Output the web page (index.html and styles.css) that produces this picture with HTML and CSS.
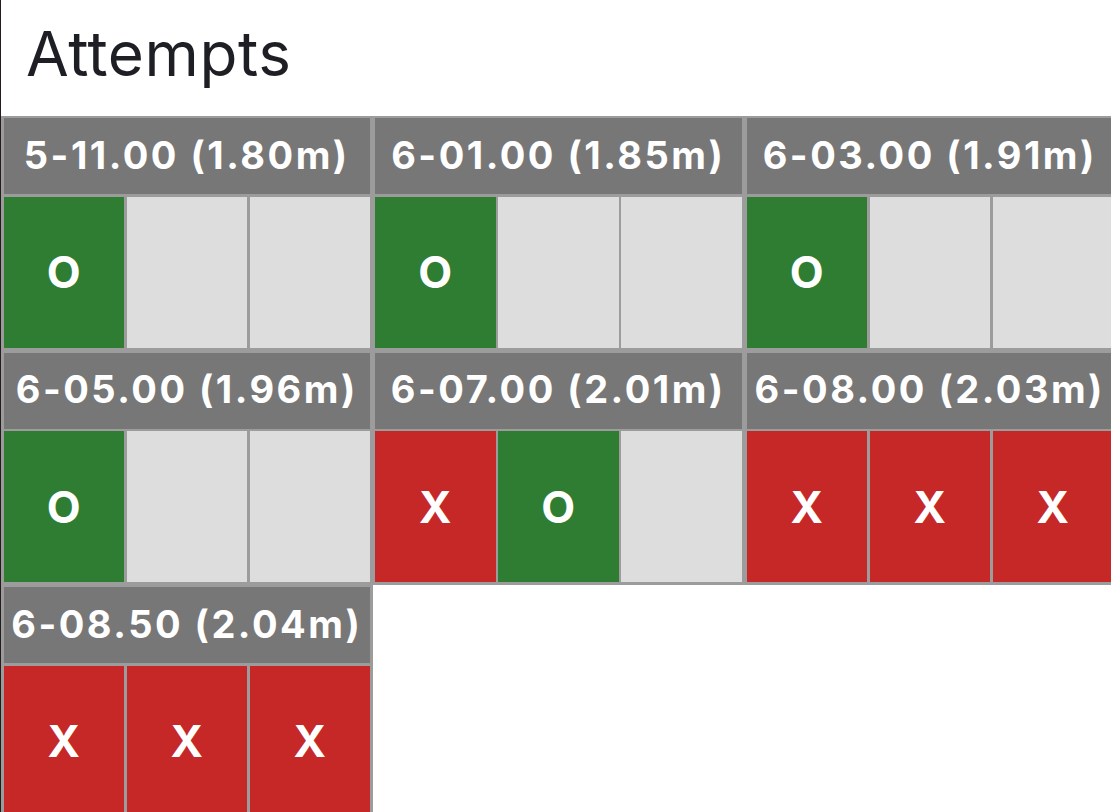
FILE: index.html
```html
<!DOCTYPE html>
<html>
<head>
<meta charset="utf-8">
<link rel="stylesheet" href="styles.css">
</head>
<body>
<div class="page">
  <h1 class="title">Attempts</h1>
  <div class="grid">
    <div class="block">
      <div class="head">5-11.00 (1.80m)</div>
      <div class="cells"><div class="cell ok">O</div><div class="cell"></div><div class="cell"></div></div>
    </div>
    <div class="block">
      <div class="head">6-01.00 (1.85m)</div>
      <div class="cells"><div class="cell ok">O</div><div class="cell"></div><div class="cell"></div></div>
    </div>
    <div class="block">
      <div class="head">6-03.00 (1.91m)</div>
      <div class="cells"><div class="cell ok">O</div><div class="cell"></div><div class="cell"></div></div>
    </div>
    <div class="block">
      <div class="head">6-05.00 (1.96m)</div>
      <div class="cells"><div class="cell ok">O</div><div class="cell"></div><div class="cell"></div></div>
    </div>
    <div class="block">
      <div class="head">6-07.00 (2.01m)</div>
      <div class="cells"><div class="cell miss">X</div><div class="cell ok">O</div><div class="cell"></div></div>
    </div>
    <div class="block">
      <div class="head">6-08.00 (2.03m)</div>
      <div class="cells"><div class="cell miss">X</div><div class="cell miss">X</div><div class="cell miss">X</div></div>
    </div>
    <div class="block">
      <div class="head">6-08.50 (2.04m)</div>
      <div class="cells"><div class="cell miss">X</div><div class="cell miss">X</div><div class="cell miss">X</div></div>
    </div>
  </div>
</div>
</body>
</html>
```
FILE: styles.css
```css
html, body {
  margin: 0;
  padding: 0;
  background: #ffffff;
  overflow: hidden;
}
body {
  font-family: Inter, "Liberation Sans", sans-serif;
}
.page {
  border-left: 1px solid #241c1c;
  min-height: 812px;
  box-sizing: border-box;
}
.title {
  margin: 0;
  height: 115.5px;
  box-sizing: border-box;
  padding: 19px 0 0 25px;
  font-size: 62px;
  line-height: 70px;
  font-weight: 400;
  color: #1e1f24;
  letter-spacing: 0.6px;
}
.grid {
  display: grid;
  grid-template-columns: repeat(3, 371.5px);
  grid-auto-rows: 234.5px;
}
.block {
  background: #9c9c9c;
  padding: 2.5px;
  display: grid;
  grid-template-rows: 76px 151px;
  row-gap: 2.5px;
}
.head {
  background: #777777;
  color: #ffffff;
  font-weight: 700;
  font-size: 38px;
  letter-spacing: 2.5px;
  display: flex;
  align-items: center;
  justify-content: center;
  padding-bottom: 3px;
  box-sizing: border-box;
  white-space: nowrap;
}
.cells {
  display: grid;
  grid-template-columns: repeat(3, 1fr);
  column-gap: 2.5px;
}
.cell {
  background: #dddddd;
  color: #ffffff;
  font-weight: 700;
  font-size: 44px;
  display: flex;
  align-items: center;
  justify-content: center;
}
.cell.ok {
  background: #2e7d32;
}
.cell.miss {
  background: #c62828;
}
```
